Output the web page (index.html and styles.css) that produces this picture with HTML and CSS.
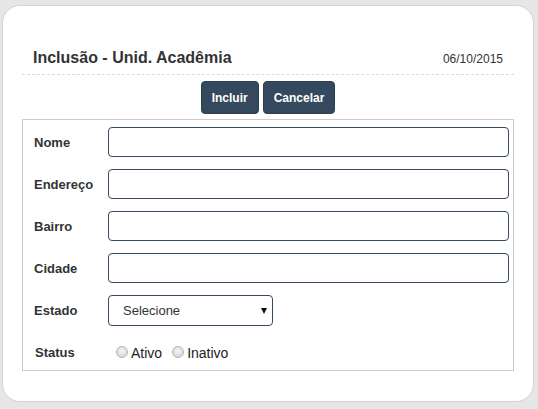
FILE: index.html
```html
<!DOCTYPE html>
<html lang="pt-BR">
<head>
<meta charset="utf-8">
<title>Inclusão - Unid. Acadêmia</title>
<link rel="stylesheet" href="styles.css">
</head>
<body>
<div class="card">
  <div class="header">
    <h1 class="title">Inclusão - Unid. Acadêmia</h1>
    <span class="date">06/10/2015</span>
  </div>
  <div class="actions">
    <button class="btn" type="button">Incluir</button>
    <button class="btn" type="button">Cancelar</button>
  </div>
  <div class="form">
    <label class="label">Nome</label>
    <input class="field" type="text">
    <label class="label">Endereço</label>
    <input class="field" type="text">
    <label class="label">Bairro</label>
    <input class="field" type="text">
    <label class="label">Cidade</label>
    <input class="field" type="text">
    <label class="label">Estado</label>
    <div class="select-wrap">
      <select class="select"><option>Selecione</option></select>
    </div>
    <span class="label status-label">Status</span>
    <div class="radios">
      <label class="radio"><input type="radio" name="status"><span>Ativo</span></label>
      <label class="radio"><input type="radio" name="status"><span>Inativo</span></label>
    </div>
  </div>
</div>
</body>
</html>
```
FILE: styles.css
```css
* { box-sizing: border-box; }
html, body { margin: 0; }
body {
  background: #e6e6e6;
  padding: 5px 4px 0 2px;
  font-family: "Liberation Sans", Arial, sans-serif;
  color: #333;
}
.card {
  height: 397px;
  background: #fff;
  border: 1px solid #d2d2d2;
  border-radius: 18px;
  padding: 42px 19px 0 19px;
}
.header {
  display: flex;
  justify-content: space-between;
  align-items: baseline;
  padding: 0 11px 6px 11px;
  border-bottom: 1px dashed #dcdcdc;
}
.title {
  margin: 0;
  font-size: 16px;
  line-height: 20px;
  font-weight: bold;
  color: #333;
}
.date {
  font-size: 12px;
  color: #333;
}
.actions {
  display: flex;
  justify-content: center;
  gap: 4px;
  margin-top: 6px;
}
.btn {
  height: 33px;
  padding: 0 10px;
  border: 1px solid #2c3e50;
  border-radius: 4px;
  background: #34495e;
  color: #fff;
  font-family: "Liberation Sans", Arial, sans-serif;
  font-size: 12px;
  font-weight: bold;
}
.form {
  margin-top: 5px;
  border: 1px solid #cccccc;
  padding: 7px 4px 4px 11px;
  display: grid;
  grid-template-columns: 74px 1fr;
  row-gap: 12px;
  align-items: center;
}
.label {
  font-size: 13px;
  font-weight: bold;
  color: #333;
}
.status-label { padding-left: 1px; }
.field {
  height: 30px;
  width: 100%;
  border: 1px solid #34495e;
  border-radius: 4px;
  background: #fff;
  font: 13px "Liberation Sans", Arial, sans-serif;
}
.select-wrap {
  position: relative;
  width: 165px;
}
.select {
  appearance: none;
  -webkit-appearance: none;
  width: 165px;
  height: 31px;
  border: 1px solid #34495e;
  border-radius: 4px;
  background: #fff;
  padding: 0 0 0 14px;
  font: 13px "Liberation Sans", Arial, sans-serif;
  color: #333;
}
.select-wrap::after {
  content: "";
  position: absolute;
  right: 6px;
  top: 13px;
  border-left: 3.5px solid transparent;
  border-right: 3.5px solid transparent;
  border-top: 6px solid #111;
  pointer-events: none;
}
.radios {
  display: flex;
  align-items: center;
  height: 28px;
  padding-left: 8px;
  font-size: 14px;
  color: #222;
}
.radio {
  display: flex;
  align-items: center;
  margin-right: 10px;
}
.radio input {
  appearance: none;
  -webkit-appearance: none;
  width: 12px;
  height: 12px;
  margin: 0 3px 0 0;
  border: 1px solid #b4b4b4;
  border-radius: 50%;
  background: radial-gradient(circle at 50% 40%, #f4f4f4 0%, #dedede 60%, #cfcfcf 100%);
}
.radio span { position: relative; top: 1px; }
```
